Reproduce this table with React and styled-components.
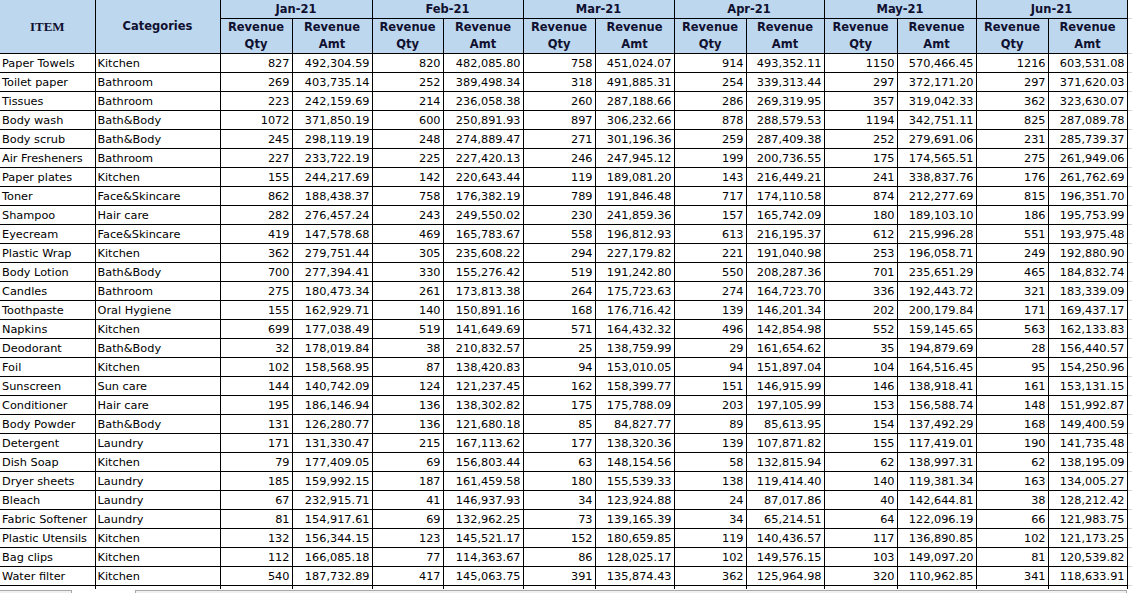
import React from "react";
import styled, { createGlobalStyle } from "styled-components";

const Global = createGlobalStyle`
  html, body { margin: 0; padding: 0; background: #fff; overflow: hidden; }
  body { font-family: "DejaVu Sans", sans-serif; }
`;

const months = ["Jan-21", "Feb-21", "Mar-21", "Apr-21", "May-21", "Jun-21"];

const raw = `Paper Towels|Kitchen|827 492,304.59|820 482,085.80|758 451,024.07|914 493,352.11|1150 570,466.45|1216 603,531.08
Toilet paper|Bathroom|269 403,735.14|252 389,498.34|318 491,885.31|254 339,313.44|297 372,171.20|297 371,620.03
Tissues|Bathroom|223 242,159.69|214 236,058.38|260 287,188.66|286 269,319.95|357 319,042.33|362 323,630.07
Body wash|Bath&Body|1072 371,850.19|600 250,891.93|897 306,232.66|878 288,579.53|1194 342,751.11|825 287,089.78
Body scrub|Bath&Body|245 298,119.19|248 274,889.47|271 301,196.36|259 287,409.38|252 279,691.06|231 285,739.37
Air Fresheners|Bathroom|227 233,722.19|225 227,420.13|246 247,945.12|199 200,736.55|175 174,565.51|275 261,949.06
Paper plates|Kitchen|155 244,217.69|142 220,643.44|119 189,081.20|143 216,449.21|241 338,837.76|176 261,762.69
Toner|Face&Skincare|862 188,438.37|758 176,382.19|789 191,846.48|717 174,110.58|874 212,277.69|815 196,351.70
Shampoo|Hair care|282 276,457.24|243 249,550.02|230 241,859.36|157 165,742.09|180 189,103.10|186 195,753.99
Eyecream|Face&Skincare|419 147,578.68|469 165,783.67|558 196,812.93|613 216,195.37|612 215,996.28|551 193,975.48
Plastic Wrap|Kitchen|362 279,751.44|305 235,608.22|294 227,179.82|221 191,040.98|253 196,058.71|249 192,880.90
Body Lotion|Bath&Body|700 277,394.41|330 155,276.42|519 191,242.80|550 208,287.36|701 235,651.29|465 184,832.74
Candles|Bathroom|275 180,473.34|261 173,813.38|264 175,723.63|274 164,723.70|336 192,443.72|321 183,339.09
Toothpaste|Oral Hygiene|155 162,929.71|140 150,891.16|168 176,716.42|139 146,201.34|202 200,179.84|171 169,437.17
Napkins|Kitchen|699 177,038.49|519 141,649.69|571 164,432.32|496 142,854.98|552 159,145.65|563 162,133.83
Deodorant|Bath&Body|32 178,019.84|38 210,832.57|25 138,759.99|29 161,654.62|35 194,879.69|28 156,440.57
Foil|Kitchen|102 158,568.95|87 138,420.83|94 153,010.05|94 151,897.04|104 164,516.45|95 154,250.96
Sunscreen|Sun care|144 140,742.09|124 121,237.45|162 158,399.77|151 146,915.99|146 138,918.41|161 153,131.15
Conditioner|Hair care|195 186,146.94|136 138,302.82|175 175,788.09|203 197,105.99|153 156,588.74|148 151,992.87
Body Powder|Bath&Body|131 126,280.77|136 121,680.18|85 84,827.77|89 85,613.95|154 137,492.29|168 149,400.59
Detergent|Laundry|171 131,330.47|215 167,113.62|177 138,320.36|139 107,871.82|155 117,419.01|190 141,735.48
Dish Soap|Kitchen|79 177,409.05|69 156,803.44|63 148,154.56|58 132,815.94|62 138,997.31|62 138,195.09
Dryer sheets|Laundry|185 159,992.15|187 161,459.58|180 155,539.33|138 119,414.40|140 119,381.34|163 134,005.27
Bleach|Laundry|67 232,915.71|41 146,937.93|34 123,924.88|24 87,017.86|40 142,644.81|38 128,212.42
Fabric Softener|Laundry|81 154,917.61|69 132,962.25|73 139,165.39|34 65,214.51|64 122,096.19|66 121,983.75
Plastic Utensils|Kitchen|132 156,344.15|123 145,521.17|152 180,659.85|119 140,436.57|117 136,890.85|102 121,173.25
Bag clips|Kitchen|112 166,085.18|77 114,363.67|86 128,025.17|102 149,576.15|103 149,097.20|81 120,539.82
Water filter|Kitchen|540 187,732.89|417 145,063.75|391 135,874.43|362 125,964.98|320 110,962.85|341 118,633.91`;

const rows = raw.split("\n").map((line) => {
  const [item, cat, ...m] = line.split("|");
  return { item, cat, months: m.map((s) => s.split(" ")) };
});

const colWidths = [95, 125, 72, 80, 71, 80, 72, 79, 72, 78, 73, 79, 72, 79];

const Sheet = styled.div`
  width: 1132px;
  height: 593px;
  overflow: hidden;
  display: flex;
  flex-direction: column;
`;

const Table = styled.table`
  border-collapse: collapse;
  table-layout: fixed;
  width: ${colWidths.reduce((a, b) => a + b, 0) + 12}px;
  font-size: 11.3px;
  color: #000;
`;

const HeadCell = styled.th`
  background: #bdd7ee;
  border: 1px solid #000;
  border-top: none;
  border-left: ${(p) => (p.$first ? "none" : "1px solid #000")};
  font-family: ${(p) => (p.$serif ? '"Liberation Serif", serif' : '"DejaVu Sans", sans-serif')};
  font-size: ${(p) => (p.$serif ? "13px" : "11.5px")};
  font-weight: bold;
  color: #101030;
  text-align: center;
  vertical-align: middle;
  padding: 0;
  line-height: 17px;
  height: ${(p) => p.$h}px;
  white-space: nowrap;
  overflow: hidden;
`;

const StubHead = styled.th`
  border: none;
  border-bottom: 1px solid #d4d4d4;
  padding: 0;
  background: #fff;
`;

const Row = styled.tr`
  height: 19px;
`;

const Cell = styled.td`
  border: 1px solid #000;
  border-left: ${(p) => (p.$first ? "none" : "1px solid #000")};
  padding: ${(p) => (p.$num ? "0 2px 0 0" : "0 0 0 2px")};
  text-align: ${(p) => (p.$num ? "right" : "left")};
  line-height: 17px;
  height: 18px;
  vertical-align: bottom;
  white-space: nowrap;
  overflow: hidden;
`;

const StubCell = styled.td`
  border: none;
  border-bottom: 1px solid #d4d4d4;
  border-left: 1px solid #d4d4d4;
  padding: 0;
`;

const TailCell = styled.td`
  border-left: ${(p) => (p.$first ? "none" : "1px solid #000")};
  border-right: 1px solid #000;
  height: 3px;
  padding: 0;
`;

const TailRow = styled.tr`
  height: 3px;
`;

const Footer = styled.div`
  display: flex;
  align-items: flex-start;
  gap: 63px;
  margin-top: 1px;
`;

const TabBox = styled.div`
  width: ${(p) => p.$w}px;
  height: 8px;
  background: #f0f0f0;
  border: 1px solid #a8a8a8;
  border-left: ${(p) => (p.$first ? "none" : "1px solid #a8a8a8")};
  border-bottom: none;
`;

export default function App() {
  return (
    <Sheet>
      <Global />
      <Table>
        <colgroup>
          {colWidths.map((w, i) => (
            <col key={i} style={{ width: w }} />
          ))}
          <col style={{ width: 12 }} />
        </colgroup>
        <thead>
          <tr>
            <HeadCell rowSpan={2} $first $serif $h={18}>ITEM</HeadCell>
            <HeadCell rowSpan={2} $h={18}>Categories</HeadCell>
            {months.map((m) => (
              <HeadCell key={m} colSpan={2} $h={18}>{m}</HeadCell>
            ))}
            <StubHead />
          </tr>
          <tr>
            {months.map((m) => (
              <React.Fragment key={m}>
                <HeadCell $h={33}>Revenue<br />Qty</HeadCell>
                <HeadCell $h={33}>Revenue<br />Amt</HeadCell>
              </React.Fragment>
            ))}
            <StubHead />
          </tr>
        </thead>
        <tbody>
          {rows.map((r) => (
            <Row key={r.item}>
              <Cell $first>{r.item}</Cell>
              <Cell>{r.cat}</Cell>
              {r.months.map(([q, a], i) => (
                <React.Fragment key={i}>
                  <Cell $num>{q}</Cell>
                  <Cell $num>{a}</Cell>
                </React.Fragment>
              ))}
              <StubCell />
            </Row>
          ))}
          <TailRow>
            {colWidths.map((w, i) => (
              <TailCell key={i} $first={i === 0} />
            ))}
            <td />
          </TailRow>
        </tbody>
      </Table>
      <Footer>
        <TabBox $first $w={71} />
        <TabBox $w={990} />
      </Footer>
    </Sheet>
  );
}
